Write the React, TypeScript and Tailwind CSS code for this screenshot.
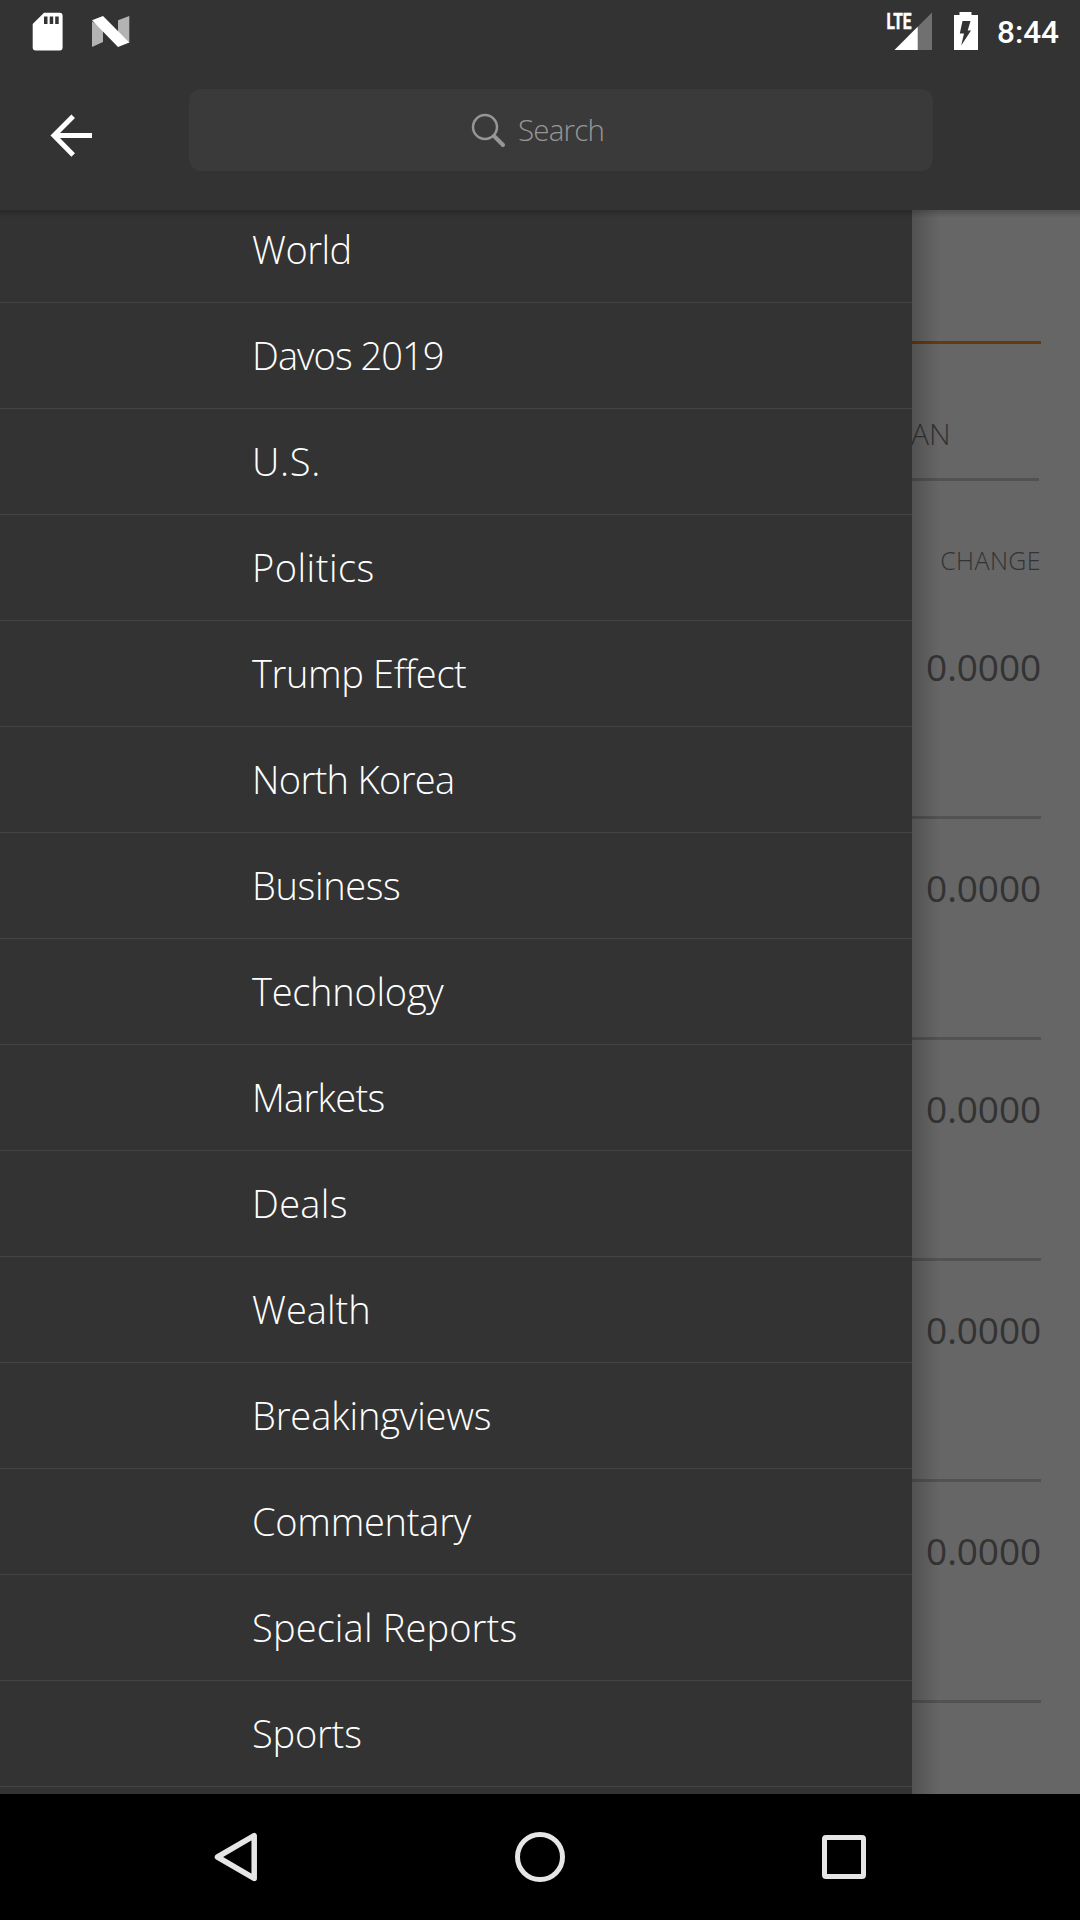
const sections = [
  { label: 'World', tracking: 'tracking-[-0.5px]' },
  { label: 'Davos 2019', tracking: 'tracking-[-0.95px]' },
  { label: 'U.S.', tracking: 'tracking-[0.7px]' },
  { label: 'Politics', tracking: 'tracking-[0.5px]' },
  { label: 'Trump Effect', tracking: 'tracking-[-0.35px]' },
  { label: 'North Korea', tracking: 'tracking-[-0.65px]' },
  { label: 'Business', tracking: 'tracking-[-0.35px]' },
  { label: 'Technology', tracking: 'tracking-[-0.25px]' },
  { label: 'Markets', tracking: 'tracking-[-0.7px]' },
  { label: 'Deals', tracking: 'tracking-[0.3px]' },
  { label: 'Wealth', tracking: 'tracking-[0px]' },
  { label: 'Breakingviews', tracking: 'tracking-[-0.12px]' },
  { label: 'Commentary', tracking: 'tracking-[-0.25px]' },
  { label: 'Special Reports', tracking: 'tracking-[0.15px]' },
  { label: 'Sports', tracking: 'tracking-[-0.2px]' },
];

const changes = ['0.0000', '0.0000', '0.0000', '0.0000', '0.0000'];

function StatusBar() {
  return (
    <div className="flex h-[63px] items-start justify-between pl-8 pr-[21px] text-white">
      <div className="flex gap-[28px] pt-3">
        <svg width="32" height="40" viewBox="0 0 32 40">
          <path
            fill="#fff"
            fillRule="evenodd"
            d="M12 .8H27.6a3 3 0 0 1 3 3V35.400a3 3 0 0 1-3 3H3.700a3 3 0 0 1-3-3V12Zm0 3.700v7.500h3.500V4.500Zm5.700 0v7.500h3.500V4.500Zm5.500 0v7.500h3.500V4.500Z"
          />
        </svg>
        <svg width="38" height="40" viewBox="0 0 38 40">
          <path fill="#b3b3b3" d="M0 9.500 11 16v14L0 35ZM26 8.300 37.300 4v27L26 20Z" />
          <path fill="#fff" d="M0 8.300 11 4 37.300 30.500 26 35Z" />
        </svg>
      </div>
      <div className="flex">
        <svg width="48" height="52" viewBox="0 0 48 52">
          <path fill="#707070" d="M46 12.500V50H8.500Z" />
          <path fill="#333" d="M0 10h27v15l-4.500 6H0Z" />
          <text
            x="0.5"
            y="29.2"
            textLength="25"
            lengthAdjust="spacingAndGlyphs"
            fill="#fff"
            stroke="#fff"
            strokeWidth="0.5"
            className="font-[Roboto] text-[22px] font-bold"
          >
            LTE
          </text>
          <path fill="#fff" d="M31.700 26.800V50H8.500Z" />
        </svg>
        <svg className="ml-[19px]" width="26" height="52" viewBox="0 0 26 52">
          <path fill="#fff" d="M6.500 12h12v3H25v35H1V15h5.500Z" />
          <path fill="#333" d="M9.500 21h8l-2.800 9.500H18L8.200 45.500 11 33.500H6.800Z" />
        </svg>
        <span className="ml-[18px] mt-[15px] w-[62px] whitespace-nowrap font-[Roboto] text-[31.5px] font-medium leading-9">
          8:44
        </span>
      </div>
    </div>
  );
}

function AppBar() {
  return (
    <div className="flex h-[147px] items-start">
      <svg className="ml-[50px] mt-[51px]" width="43" height="43" viewBox="0 0 43 43" fill="none">
        <path d="M42 21.500H4M23.200 2.200 4 21.500 23.200 41" stroke="#fff" strokeWidth="5" />
      </svg>
      <div className="ml-24 mt-[26px] flex h-[82px] w-[744px] items-center rounded-[12px] bg-[#3a3a3a] pl-[282px] text-[#969696]">
        <svg className="mt-px" width="36" height="36" viewBox="0 0 36 36" fill="none" stroke="#969696">
          <circle cx="14" cy="14" r="12" strokeWidth="2.500" />
          <path d="m23 23 9 9" strokeWidth="4" strokeLinecap="round" />
        </svg>
        <span className="ml-[11px] text-[29.500px] font-light leading-10 tracking-[-0.8px]">Search</span>
      </div>
    </div>
  );
}

function MarketsPage() {
  return (
    <div className="relative flex w-[168px] flex-col bg-[#666] pr-[39px] text-[#333]">
      <div className="h-[131px] shrink-0" />
      <div className="h-[3px] shrink-0 bg-[#663a0c]" />
      <div className="h-[134px] shrink-0 pt-[70px] text-[30px] font-light leading-10">
        <span className="-ml-px">AN</span>
      </div>
      <div className="mr-[2px] h-[3px] shrink-0 bg-[#525252]" />
      <div className="h-[117px] shrink-0 whitespace-nowrap pt-[63px] text-right text-[25px] font-light leading-8 tracking-[0.4px]">
        CHANGE
      </div>
      {changes.map((value, i) => (
        <div
          key={i}
          className="flex h-[221px] shrink-0 justify-end border-b-[3px] border-[#525252] pt-[44px] text-[37px] leading-[50px] tracking-[-0.1px]"
        >
          {value}
        </div>
      ))}
      <div className="absolute inset-y-0 left-0 w-7 bg-gradient-to-r from-black/20 to-transparent" />
      <div className="absolute inset-x-0 top-0 h-2 bg-gradient-to-b from-black/20 to-transparent" />
    </div>
  );
}

function Drawer() {
  return (
    <nav className="relative w-[912px] overflow-hidden bg-[#333] text-white">
      <ul className="-mt-[13px]">
        {sections.map((s) => (
          <li key={s.label} className="flex h-[106px] items-center border-b border-[#444] pl-[252px] pb-px">
            <span className={`whitespace-nowrap text-[38px] font-light leading-[52px] ${s.tracking}`}>{s.label}</span>
          </li>
        ))}
      </ul>
      <div className="absolute inset-x-0 top-0 h-2 bg-gradient-to-b from-black/20 to-transparent" />
    </nav>
  );
}

function NavigationBar() {
  return (
    <div className="flex h-[126px] items-center bg-black pl-[212px] text-[#e6e6e6]">
      <svg width="48" height="54" viewBox="0 0 48 54" fill="none" stroke="#e6e6e6" strokeWidth="5.500" strokeLinejoin="round">
        <path d="M42.200 5.700v42.700L5.500 27Z" />
      </svg>
      <div className="ml-[255px] size-[50px] rounded-full border-[5.500px] border-[#e6e6e6]" />
      <div className="ml-[257px] size-[44px] rounded-[4px] border-[5px] border-[#e6e6e6]" />
    </div>
  );
}

export default function App() {
  return (
    <div className="flex h-[1920px] w-[1080px] flex-col overflow-hidden bg-[#333] font-['Open_Sans',sans-serif]">
      <StatusBar />
      <AppBar />
      <div className="flex h-[1584px] overflow-hidden">
        <Drawer />
        <MarketsPage />
      </div>
      <NavigationBar />
    </div>
  );
}
